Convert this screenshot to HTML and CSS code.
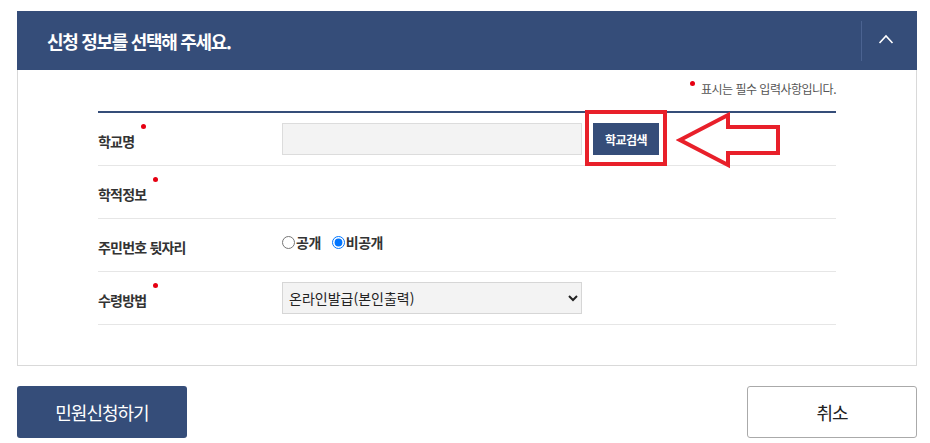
FILE: index.html
```html
<!DOCTYPE html>
<html lang="ko">
<head>
    <meta charset="UTF-8">
    <meta name="viewport" content="width=device-width, initial-scale=1.0">
    <title>신청 정보 선택</title>
    <link rel="stylesheet" href="styles.css">
</head>
<body>
    <div class="wrap">
        <div class="panel">
            <div class="panel-head">
                <h2 class="panel-title">신청 정보를 선택해 주세요.</h2>
                <span class="head-sep"></span>
                <button class="head-toggle" type="button" aria-label="접기">
                    <svg width="16" height="10" viewBox="0 0 16 10">
                        <polyline points="1.5,9 8,2 14.5,9" fill="none" stroke="#fff" stroke-width="1.6"/>
                    </svg>
                </button>
            </div>
            <div class="panel-body">
                <p class="note"><span class="req"></span>표시는 필수 입력사항입니다.</p>
                <div class="form">
                    <div class="row">
                        <div class="label">학교명<span class="req"></span></div>
                        <div class="field">
                            <input class="text-input" type="text">
                            <span class="btn-wrap">
                                <button class="btn-search" type="button">학교검색</button>
                                <span class="mark-box"></span>
                                <svg class="mark-arrow" width="106" height="58" viewBox="0 0 106 58">
                                    <polygon points="4,29 52,4 52,16 102,16 102,42 52,42 52,54" fill="none" stroke="#e8202a" stroke-width="4"/>
                                </svg>
                            </span>
                        </div>
                    </div>
                    <div class="row">
                        <div class="label">학적정보<span class="req"></span></div>
                        <div class="field"></div>
                    </div>
                    <div class="row">
                        <div class="label">주민번호 뒷자리</div>
                        <div class="field radios">
                            <label class="radio"><input type="radio" name="rrn">공개</label>
                            <label class="radio"><input type="radio" name="rrn" checked>비공개</label>
                        </div>
                    </div>
                    <div class="row">
                        <div class="label">수령방법<span class="req"></span></div>
                        <div class="field">
                            <select class="select">
                                <option>온라인발급(본인출력)</option>
                            </select>
                        </div>
                    </div>
                </div>
            </div>
        </div>
        <div class="actions">
            <button class="btn-primary" type="button">민원신청하기</button>
            <button class="btn-cancel" type="button">취소</button>
        </div>
    </div>
</body>
</html>
```

FILE: styles.css
```css
body {
    margin: 0;
    padding: 0;
    background: #fff;
    font-family: "Noto Sans CJK KR", "Noto Sans", sans-serif;
    color: #222;
}
.wrap {
    width: 900px;
    padding: 11px 0 0 17px;
}
.panel {
    border: 1px solid #d9d9d9;
    border-top: none;
}
.panel-head {
    height: 59px;
    margin: 0 -1px;
    background: #354d79;
    display: flex;
    align-items: center;
    padding-left: 30px;
}
.panel-title {
    flex: 1;
    margin: 0;
    color: #fff;
    font-size: 18px;
    font-weight: bold;
    letter-spacing: -1.3px;
}
.head-sep {
    width: 1px;
    height: 40px;
    background: #4b6391;
}
.head-toggle {
    width: 55px;
    height: 59px;
    border: none;
    background: none;
    padding: 0 7px 4px 0;
    display: flex;
    align-items: center;
    justify-content: center;
    cursor: pointer;
}
.panel-body {
    padding: 9px 80px 40px;
}
.note {
    margin: 0 0 12px;
    text-align: right;
    font-size: 12px;
    line-height: 20px;
    color: #555;
    letter-spacing: -0.5px;
}
.note .req {
    margin: 0 6px 0 0;
    vertical-align: top;
    position: relative;
    top: 2px;
}
.req {
    display: inline-block;
    width: 5px;
    height: 5px;
    border-radius: 50%;
    background: #e60012;
}
.form {
    border-top: 2px solid #354d79;
}
.row {
    display: flex;
    align-items: center;
    height: 52px;
    border-bottom: 1px solid #e6e6e6;
}
.label {
    width: 184px;
    display: flex;
    align-items: flex-start;
    gap: 7px;
    font-size: 14px;
    font-weight: bold;
    color: #333;
    letter-spacing: -0.8px;
    padding-top: 4px;
}
.label .req {
    margin-top: -7px;
}
.field {
    display: flex;
    align-items: center;
}
.text-input {
    box-sizing: border-box;
    width: 300px;
    height: 32px;
    margin: 0;
    border: 1px solid #dcdcdc;
    background: #f3f3f3;
}
.btn-wrap {
    position: relative;
    margin-left: 11px;
    display: flex;
}
.btn-search {
    width: 66px;
    height: 32px;
    border: none;
    background: #354d79;
    color: #fff;
    font-family: inherit;
    font-size: 12px;
    font-weight: bold;
    letter-spacing: -0.5px;
    padding: 0;
}
.mark-box {
    position: absolute;
    left: -8px;
    top: -13px;
    width: 82px;
    height: 56px;
    box-sizing: border-box;
    border: 4px solid #e8202a;
}
.mark-arrow {
    position: absolute;
    left: 83px;
    top: -12px;
}
.radios {
    gap: 11px;
    margin-top: -6px;
}
.radio {
    display: flex;
    align-items: center;
    font-size: 14px;
    font-weight: bold;
    color: #333;
    letter-spacing: -0.5px;
}
.radio input {
    margin: 0 1px 0 0;
    width: 13px;
    height: 13px;
}
.select {
    box-sizing: border-box;
    width: 300px;
    height: 32px;
    border: 1px solid #d6d6d6;
    background: #f3f3f3;
    font-family: inherit;
    font-size: 14px;
    color: #222;
    padding-left: 2px;
    margin: 0;
}
.actions {
    display: flex;
    justify-content: space-between;
    margin-top: 20px;
}
.btn-primary,
.btn-cancel {
    width: 170px;
    height: 52px;
    border-radius: 3px;
    font-family: inherit;
    font-size: 18px;
    letter-spacing: -1px;
    cursor: pointer;
}
.btn-primary {
    border: none;
    background: #354d79;
    color: #fff;
}
.btn-cancel {
    border: 1px solid #aaa;
    background: #fff;
    color: #222;
}
```
